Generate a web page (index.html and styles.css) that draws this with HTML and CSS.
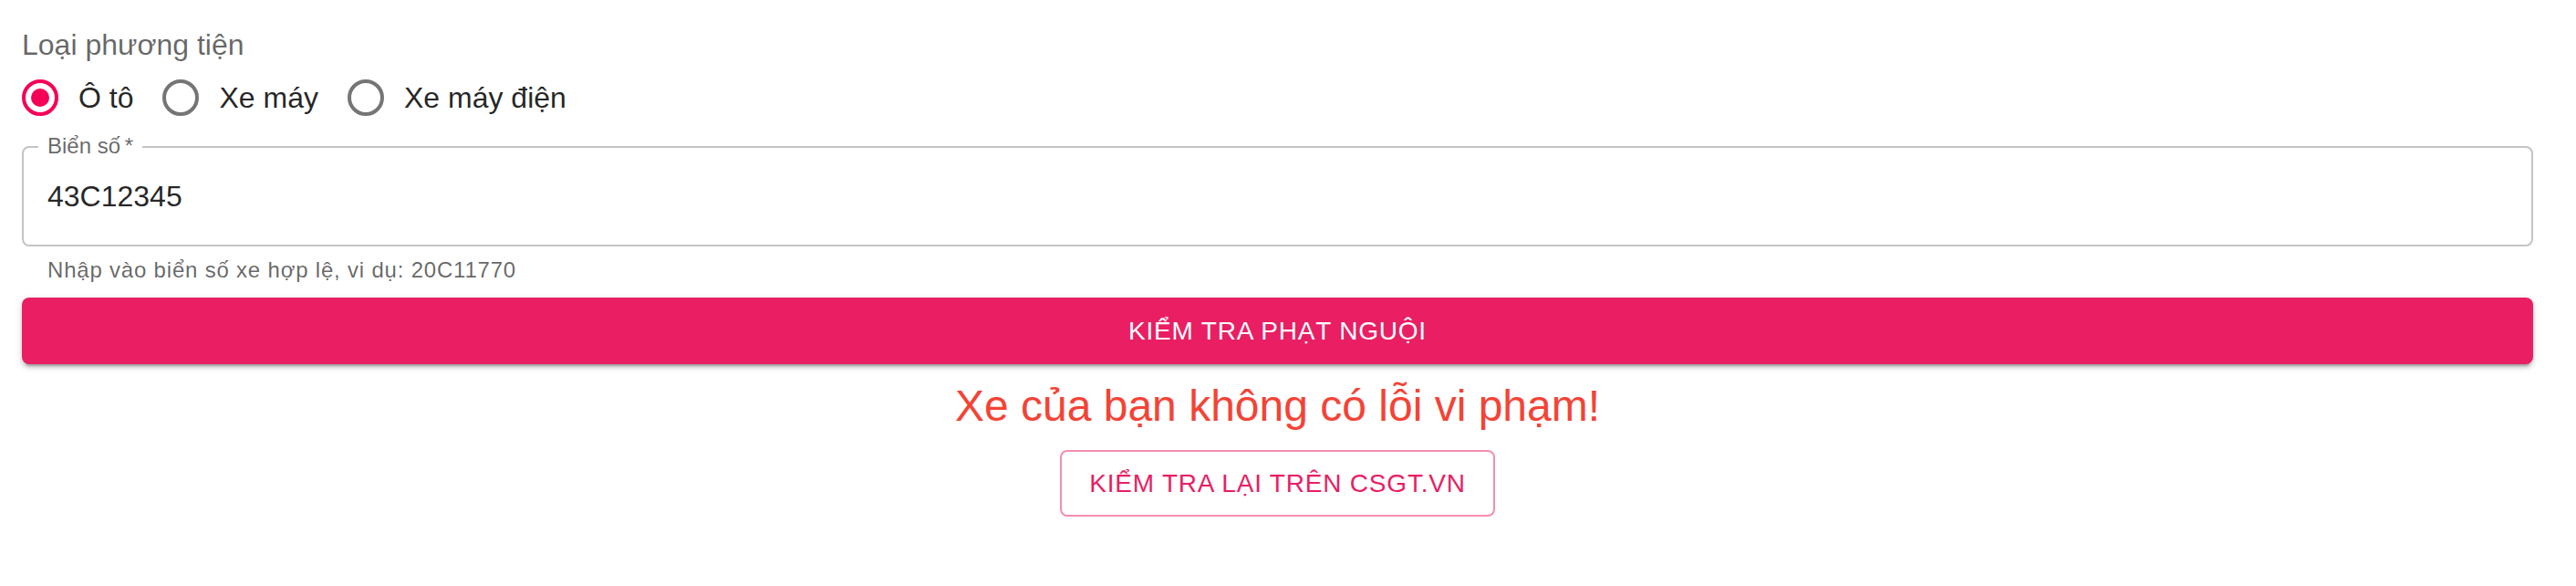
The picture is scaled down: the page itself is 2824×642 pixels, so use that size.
FILE: index.html
```html
<!DOCTYPE html>
<html lang="vi">
<head>
<meta charset="utf-8">
<title>Kiểm tra phạt nguội</title>
<link rel="stylesheet" href="styles.css">
</head>
<body>
<div class="page">
  <div class="form-label">Loại phương tiện</div>
  <div class="radio-group">
    <label class="radio-item is-checked">
      <span class="radio">
        <svg viewBox="0 0 24 24" width="48" height="48"><circle cx="12" cy="12" r="9" fill="none" stroke="currentColor" stroke-width="2"/><circle cx="12" cy="12" r="5" fill="currentColor"/></svg>
      </span>
      <span class="radio-text">Ô tô</span>
    </label>
    <label class="radio-item">
      <span class="radio">
        <svg viewBox="0 0 24 24" width="48" height="48"><circle cx="12" cy="12" r="9" fill="none" stroke="currentColor" stroke-width="2"/></svg>
      </span>
      <span class="radio-text">Xe máy</span>
    </label>
    <label class="radio-item">
      <span class="radio">
        <svg viewBox="0 0 24 24" width="48" height="48"><circle cx="12" cy="12" r="9" fill="none" stroke="currentColor" stroke-width="2"/></svg>
      </span>
      <span class="radio-text">Xe máy điện</span>
    </label>
  </div>
  <div class="text-field">
    <div class="outlined">
      <span class="float-label">Biển số&thinsp;*</span>
      <input class="field-input" type="text" value="43C12345">
    </div>
    <p class="helper">Nhập vào biển số xe hợp lệ, vi dụ: 20C11770</p>
  </div>
  <button class="btn-contained" type="button">KIỂM TRA PHẠT NGUỘI</button>
  <div class="result">
    <div class="result-text">Xe của bạn không có lỗi vi phạm!</div>
    <a class="btn-outlined" href="#">KIỂM TRA LẠI TRÊN CSGT.VN</a>
  </div>
</div>
</body>
</html>
```

FILE: styles.css
```css
* { box-sizing: border-box; }

html, body {
  margin: 0;
  padding: 0;
  background: #ffffff;
}

body {
  font-family: "Liberation Sans", Arial, Helvetica, sans-serif;
  color: rgba(0, 0, 0, 0.87);
}

.page {
  padding: 33px 47px 0 24px;
}

.form-label {
  font-size: 32px;
  line-height: 1;
  color: rgba(0, 0, 0, 0.6);
}

.radio-group {
  display: flex;
  flex-direction: row;
}

.radio-item {
  display: inline-flex;
  align-items: center;
  margin-left: -22px;
  margin-right: 32px;
  cursor: pointer;
}

.radio {
  display: inline-flex;
  padding: 18px;
  color: rgba(0, 0, 0, 0.54);
}

.radio svg {
  display: block;
}

.is-checked .radio {
  color: #f50057;
}

.radio-text {
  font-size: 32px;
  line-height: 1.5;
  color: rgba(0, 0, 0, 0.87);
}

.text-field {
  margin-top: 11px;
}

.outlined {
  position: relative;
  height: 110px;
  border: 2px solid #c4c4c4;
  border-radius: 8px;
  display: flex;
  align-items: center;
}

.float-label {
  position: absolute;
  top: -14px;
  left: 16px;
  padding: 0 10px;
  background: #ffffff;
  font-size: 24px;
  line-height: 24px;
  color: rgba(0, 0, 0, 0.6);
}

.field-input {
  width: 100%;
  height: 100%;
  border: 0;
  outline: 0;
  background: transparent;
  padding: 0 26px;
  font-family: "Liberation Sans", Arial, Helvetica, sans-serif;
  font-size: 32px;
  color: rgba(0, 0, 0, 0.87);
}

.helper {
  margin: 6px 28px 0;
  font-size: 24px;
  line-height: 1.66;
  letter-spacing: 0.8px;
  color: rgba(0, 0, 0, 0.6);
}

.btn-contained {
  display: block;
  width: 100%;
  margin-top: 10px;
  height: 73px;
  padding: 12px 32px;
  border: 0;
  border-radius: 8px;
  background: #e91e63;
  color: #ffffff;
  font-family: "Liberation Sans", Arial, Helvetica, sans-serif;
  font-size: 28px;
  line-height: 49px;
  letter-spacing: 0.8px;
  box-shadow: 0 6px 2px -4px rgba(0, 0, 0, 0.2), 0 4px 4px 0 rgba(0, 0, 0, 0.14), 0 2px 10px 0 rgba(0, 0, 0, 0.12);
}

.result {
  display: flex;
  flex-direction: column;
  align-items: center;
}

.result-text {
  margin-top: 14px;
  font-size: 48px;
  line-height: 64px;
  color: #f44336;
}

.btn-outlined {
  margin-top: 16px;
  display: inline-block;
  padding: 10px 30px;
  border: 2px solid rgba(233, 30, 99, 0.5);
  border-radius: 8px;
  font-size: 28px;
  line-height: 49px;
  letter-spacing: 0.8px;
  color: #e91e63;
  text-decoration: none;
}
```
